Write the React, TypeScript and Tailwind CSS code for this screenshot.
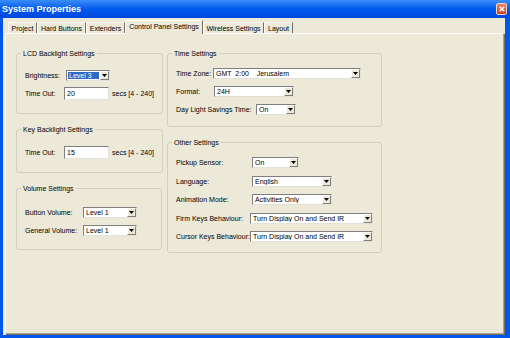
import clsx from "clsx";
import type { ReactNode } from "react";

const FONT = { fontFamily: '"Liberation Sans", Arial, sans-serif' };

function Arrow() {
  return (
    <div className="flex h-full w-[9px] shrink-0 items-center justify-center border border-t-white border-l-white border-r-[#808080] border-b-[#808080] bg-[#ece9d8]">
      <svg width="5" height="3" viewBox="0 0 5 3">
        <path d="M0 0h5L2.5 3z" fill="#000" />
      </svg>
    </div>
  );
}

function Combo({ value, width, selected }: { value: string; width: number; selected?: boolean }) {
  return (
    <div
      className="flex h-[11px] shrink-0 items-stretch border border-t-[#7f7f7f] border-l-[#7f7f7f] border-r-[#e4e2d6] border-b-[#e4e2d6] bg-white"
      style={{ width }}
    >
      <div className="flex min-w-0 flex-1 items-center p-[1px]">
        <span
          className={clsx(
            "flex h-full flex-1 items-center overflow-hidden whitespace-pre pl-[1px] text-[7px] leading-none",
            selected ? "bg-[#316ac5] text-white" : "text-black"
          )}
        >
          {value}
        </span>
      </div>
      <Arrow />
    </div>
  );
}

function TextBox({ value, width }: { value: string; width: number }) {
  return (
    <div
      className="flex h-[13px] shrink-0 items-center border border-t-[#7f7f7f] border-l-[#7f7f7f] border-r-[#e4e2d6] border-b-[#e4e2d6] bg-white pl-[2px] text-[7px] leading-none"
      style={{ width }}
    >
      {value}
    </div>
  );
}

function Row({ label, labelWidth, children }: { label: string; labelWidth: number; children: ReactNode }) {
  return (
    <div className="flex items-center whitespace-nowrap">
      <span className="shrink-0 text-[7px] leading-none" style={{ width: labelWidth }}>
        {label}
      </span>
      {children}
    </div>
  );
}

function Group({ title, className, children }: { title: string; className: string; children: ReactNode }) {
  return (
    <fieldset className={clsx("rounded-[3px] border border-[#d0d0bf] px-[8px]", className)}>
      <legend className="ml-[-4px] px-[2px] text-[7px] leading-[9px] text-black">{title}</legend>
      {children}
    </fieldset>
  );
}

const tabs = [
  { name: "Project", w: 29 },
  { name: "Hard Buttons", w: 49 },
  { name: "Extenders", w: 39 },
  { name: "Control Panel Settings", w: 78, active: true },
  { name: "Wireless Settings", w: 61 },
  { name: "Layout", w: 29 },
];

export default function App() {
  return (
    <div className="flex h-[338px] w-[510px] flex-col whitespace-nowrap bg-[#0055ea] text-black" style={FONT}>
      {/* Title bar */}
      <div className="flex h-[18px] shrink-0 items-center justify-between bg-gradient-to-b from-[#3a8cf8] via-[#0058ee] to-[#0048dc] pl-[2px] pr-[3px]">
        <span className="text-[9px] font-bold leading-none text-white">System Properties</span>
        <div className="flex h-[12px] w-[11px] items-center justify-center rounded-[2px] border border-[#f6d0c4] bg-gradient-to-b from-[#e98360] to-[#c9401a]">
          <svg width="6" height="6" viewBox="0 0 6 6">
            <path d="M0.7 0.7L5.3 5.3M5.3 0.7L0.7 5.3" stroke="#fff" strokeWidth="1.5" />
          </svg>
        </div>
      </div>

      {/* Client area */}
      <div className="ml-[3px] mr-[5px] mb-[3px] flex flex-1 flex-col bg-[#ece9d8] pl-[2px] pr-[1px]">
        {/* Tabs */}
        <div className="flex h-[15px] shrink-0 items-end pl-[3px]">
          {tabs.map((t) => (
            <div
              key={t.name}
              className={clsx(
                "flex items-center justify-center border-t border-l border-r border-t-white border-l-white border-r-[#716f64] text-[7px] leading-none",
                t.active ? "relative z-10 -mb-px h-[14px] bg-[#ece9d8] pb-[2px]" : "h-[11px]"
              )}
              style={{ width: t.w }}
            >
              {t.name}
            </div>
          ))}
        </div>

        {/* Tab page */}
        <div className="mb-[1px] flex flex-1 gap-[5px] border border-t-white border-l-white border-r-[#a5a291] border-b-[#a5a291] pl-[10px] pt-[15px] shadow-[1px_1px_0_#716f64]">
          {/* Left column */}
          <div className="flex w-[146px] flex-col gap-[11px]">
            <Group title="LCD Backlight Settings" className="h-[65px]">
              <div className="mt-[12px] flex flex-col gap-[6px]">
                <Row label="Brightness:" labelWidth={41}>
                  <Combo value="Level 3" width={44} selected />
                </Row>
                <Row label="Time Out:" labelWidth={39}>
                  <TextBox value="20" width={45} />
                  <span className="ml-[3px] text-[7px] leading-none">secs [4 - 240]</span>
                </Row>
              </div>
            </Group>

            <Group title="Key Backlight Settings" className="h-[48px]">
              <div className="mt-[12px]">
                <Row label="Time Out:" labelWidth={39}>
                  <TextBox value="15" width={45} />
                  <span className="ml-[3px] text-[7px] leading-none">secs [4 - 240]</span>
                </Row>
              </div>
            </Group>

            <Group title="Volume Settings" className="h-[66px]">
              <div className="mt-[14px] flex flex-col gap-[7px]">
                <Row label="Button Volume:" labelWidth={58}>
                  <Combo value="Level 1" width={54} />
                </Row>
                <Row label="General Volume:" labelWidth={58}>
                  <Combo value="Level 1" width={54} />
                </Row>
              </div>
            </Group>
          </div>

          {/* Right column */}
          <div className="flex w-[215px] flex-col gap-[11px]">
            <Group title="Time Settings" className="h-[78px]">
              <div className="mt-[10px] flex flex-col gap-[7px]">
                <Row label="Time Zone:" labelWidth={37}>
                  <Combo value="GMT  2:00    Jerusalem" width={148} />
                </Row>
                <Row label="Format:" labelWidth={38}>
                  <Combo value="24H" width={80} />
                </Row>
                <Row label="Day Light Savings Time:" labelWidth={80}>
                  <Combo value="On" width={40} />
                </Row>
              </div>
            </Group>

            <Group title="Other Settings" className="h-[115px]">
              <div className="mt-[10px] flex flex-col gap-[7.5px]">
                <Row label="Pickup Sensor:" labelWidth={76}>
                  <Combo value="On" width={47} />
                </Row>
                <Row label="Language:" labelWidth={76}>
                  <Combo value="English" width={80} />
                </Row>
                <Row label="Animation Mode:" labelWidth={76}>
                  <Combo value="Activities Only" width={80} />
                </Row>
                <Row label="Firm Keys Behaviour:" labelWidth={74}>
                  <Combo value="Turn Display On and Send IR" width={123} />
                </Row>
                <Row label="Cursor Keys Behaviour:" labelWidth={74}>
                  <Combo value="Turn Display On and Send IR" width={123} />
                </Row>
              </div>
            </Group>
          </div>
        </div>
      </div>
    </div>
  );
}
